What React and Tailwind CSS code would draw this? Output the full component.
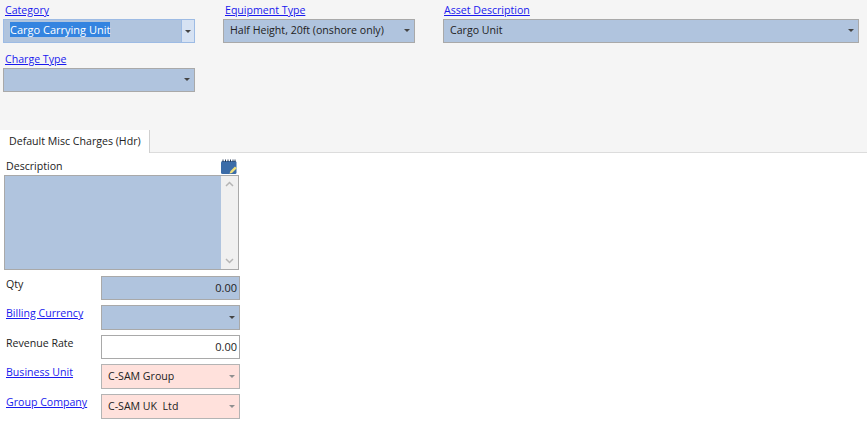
import React from "react";

function Caret({ light }) {
  return (
    <svg width="6" height="3" viewBox="0 0 6 3" className="shrink-0">
      <path d="M0 0h6L3 3z" fill={light ? "#8f8f8f" : "#444444"} />
    </svg>
  );
}

function LinkLabel({ children, className = "" }) {
  return <a className={"block text-[10.6px] leading-[14px] text-[#1a1aee] underline " + className}>{children}</a>;
}

function Combo({ value, className = "" }) {
  return (
    <div className={"flex items-center border border-[#a9a9a9] bg-[#b0c4de] pb-[1px] pl-[6px] pr-[4px] text-[10.6px] text-[#222222] " + className}>
      <span className="flex-1 whitespace-pre">{value}</span>
      <Caret />
    </div>
  );
}

function PinkCombo({ value }) {
  return (
    <div className="flex h-[25px] w-[139px] items-center border border-[#b4b4b4] bg-[#ffe1dc] pl-[6px] pr-[4px] text-[10.6px] text-[#222222]">
      <span className="flex-1 whitespace-pre">{value}</span>
      <Caret light />
    </div>
  );
}

function NoteIcon() {
  return (
    <svg width="16" height="15" viewBox="0 0 16 15">
      <rect x="0" y="2" width="15.5" height="13" rx="1.5" fill="#3b6ca8" />
      <path d="M2 0.5v2.5M4.5 0.5v2.5M7 0.5v2.5M9.5 0.5v2.5M12 0.5v2.5M14 0.5v2.5" stroke="#2b3f5c" strokeWidth="1" />
      <path d="M8.5 14.5l1-2.5 4.5-4.5 1.8 1.8-4.8 4.7z" fill="#f0e07a" />
    </svg>
  );
}

function Row({ label, link, children }) {
  return (
    <div className="flex items-start">
      <div className="w-[95px] shrink-0 pt-[1px]">
        {link ? <LinkLabel>{label}</LinkLabel> : <span className="block text-[10.6px] leading-[14px] text-[#222222]">{label}</span>}
      </div>
      {children}
    </div>
  );
}

export default function App() {
  return (
    <div className="h-[427px] w-[867px] overflow-hidden bg-white font-['Open_Sans','Noto_Sans',sans-serif]">
      <div className="h-[152px] bg-[#f5f5f5] pl-[3px] pt-[3px]">
        <div className="flex gap-[28px]">
          <div className="flex w-[192px] flex-col">
            <LinkLabel className="ml-[2px] h-[16px]">Category</LinkLabel>
            <div className="flex h-[24px] items-center border border-[#9dbbe4] bg-[#b0c4de] pl-[6px] text-[11px]">
              <span className="mb-[2px] flex-1 leading-[14px]">
                <span className="bg-[#3484e0] text-white">Cargo Carrying Unit</span>
              </span>
              <div className="flex h-full w-[13px] items-center justify-center border-l border-[#9dbbe4] bg-[#d6e2f3]">
                <Caret />
              </div>
            </div>
          </div>
          <div className="flex w-[192px] flex-col">
            <LinkLabel className="ml-[2px] h-[16px]">Equipment Type</LinkLabel>
            <Combo value="Half Height, 20ft (onshore only)" className="h-[24px]" />
          </div>
          <div className="flex w-[416px] flex-col">
            <LinkLabel className="ml-[1px] h-[16px]">Asset Description</LinkLabel>
            <Combo value="Cargo Unit" className="h-[24px]" />
          </div>
        </div>
        <div className="mt-[9px] flex w-[192px] flex-col">
          <LinkLabel className="ml-[2px] h-[16px]">Charge Type</LinkLabel>
          <Combo value="" className="h-[24px]" />
        </div>
      </div>

      <div className="-mt-[22px] flex h-[23px]">
        <div className="flex w-[150px] items-center border-r border-[#d0d0d0] bg-white pl-[9px] text-[10.6px] text-[#222222]">
          Default Misc Charges (Hdr)
        </div>
        <div className="flex-1 border-b border-[#dcdcdc]" />
      </div>

      <div className="w-[250px] pl-[4px] pt-[5px]">
        <div className="flex h-[17px] w-[235px] items-start justify-between pr-[2px]">
          <span className="ml-[2px] text-[10.6px] leading-[16px] text-[#222222]">Description</span>
          <span className="mt-[1px] block leading-none"><NoteIcon /></span>
        </div>
        <div className="flex h-[95px] w-[235px] border border-[#a9a9a9] bg-[#b0c4de]">
          <div className="flex-1" />
          <div className="flex w-[17px] flex-col items-center justify-between bg-[#f0f0f0] py-[5px] text-[#b5b5b5]">
            <svg width="9" height="6" viewBox="0 0 9 6"><path d="M1 5l3.5-3.5L8 5" fill="none" stroke="currentColor" strokeWidth="1.5" /></svg>
            <svg width="9" height="6" viewBox="0 0 9 6"><path d="M1 1l3.5 3.5L8 1" fill="none" stroke="currentColor" strokeWidth="1.5" /></svg>
          </div>
        </div>
        <div className="ml-[2px] mt-[6px] flex flex-col gap-[5px]">
          <Row label="Qty">
            <div className="flex h-[24px] w-[139px] items-center justify-end border border-[#a9a9a9] bg-[#b0c4de] pr-[2px] text-[11px] text-[#222222]">0.00</div>
          </Row>
          <Row label="Billing Currency" link>
            <Combo value="" className="h-[25px] w-[139px]" />
          </Row>
          <Row label="Revenue Rate">
            <div className="flex h-[24px] w-[139px] items-center justify-end border border-[#a9a9a9] bg-white pr-[2px] text-[11px] text-[#222222]">0.00</div>
          </Row>
          <Row label="Business Unit" link>
            <PinkCombo value="C-SAM Group" />
          </Row>
          <Row label="Group Company" link>
            <PinkCombo value="C-SAM UK  Ltd" />
          </Row>
        </div>
      </div>
    </div>
  );
}
